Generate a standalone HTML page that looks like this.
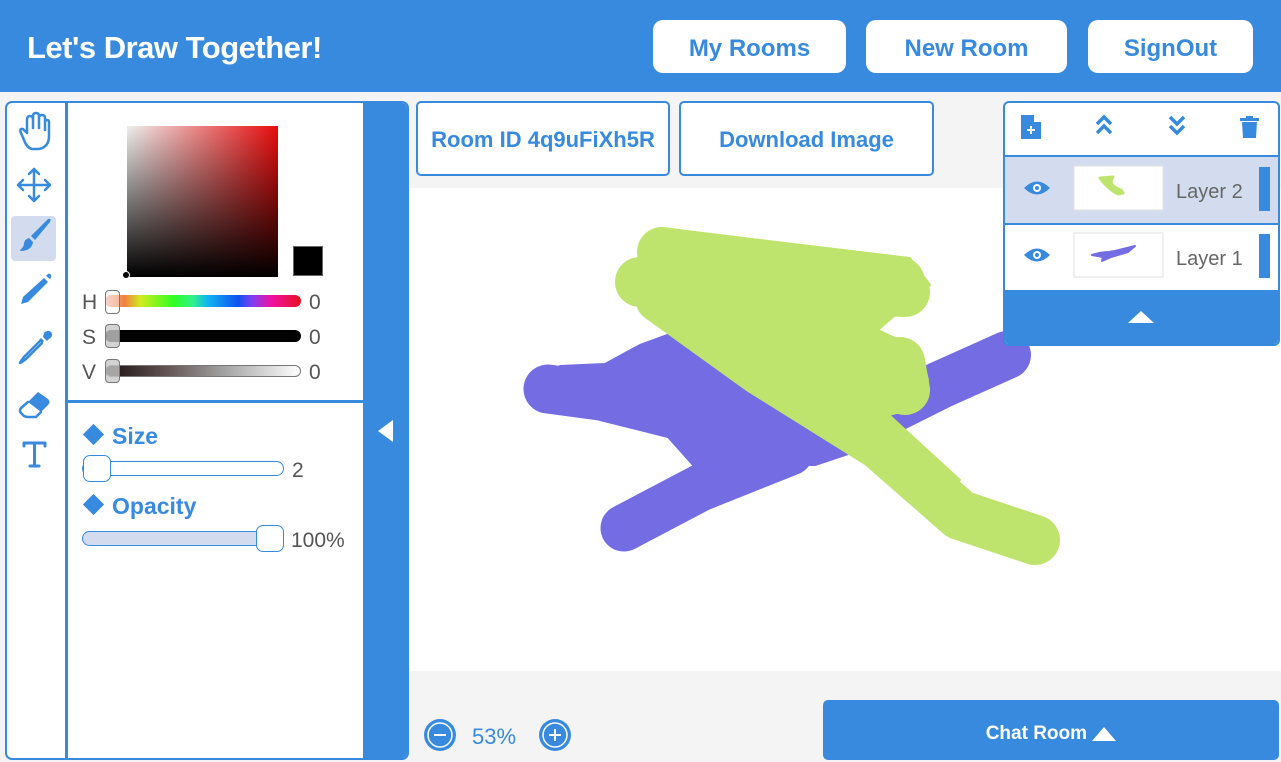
<!DOCTYPE html>
<html><head><meta charset="utf-8"><style>
*{box-sizing:border-box;margin:0;padding:0}
body{width:1281px;height:762px;overflow:hidden;background:#f4f4f4;font-family:"Liberation Sans",sans-serif;position:relative}
.abs{position:absolute}
.hdr{left:0;top:0;width:1281px;height:92px;background:#388ade}
.title{left:27px;top:30px;color:#fff;font-weight:bold;font-size:31px;letter-spacing:-0.5px}
.hb{top:20px;height:53px;background:#fff;border-radius:10px;color:#388ade;font-weight:bold;font-size:24px;display:flex;align-items:center;justify-content:center;padding-top:4px}
.box{border:2px solid #388ade;background:#fff}
.bt{color:#388ade;font-weight:bold;font-size:22px;display:flex;align-items:center;justify-content:center;border-radius:4px;padding-top:3px}
.lbl{color:#555;font-size:21px}
.track{border-radius:8px}
.thumb{background:#fff;border:1.5px solid #777;border-radius:4px}
.b2{background:#388ade}
</style></head><body>
<div class="abs hdr"></div>
<div class="abs title">Let's Draw Together!</div>
<div class="abs hb" style="left:653px;width:193px">My Rooms</div>
<div class="abs hb" style="left:866px;width:201px">New Room</div>
<div class="abs hb" style="left:1088px;width:165px">SignOut</div>

<div class="abs" style="left:410px;top:188px;width:871px;height:483px;background:#fff"></div>
<svg class="abs" style="left:0;top:0" width="1281" height="762">
<g fill="#746ce3" stroke="#746ce3" stroke-linecap="round" stroke-linejoin="round">
<path d="M548 389 L668 405" stroke-width="49"/>
<path d="M624 528 L700 488 L790 452" stroke-width="47"/>
<path d="M1007 355 L940 385 L870 420" stroke-width="48"/>
<polygon stroke-width="2" points="560,366 605,364 640,345 681,330 760,335 850,375 880,410 860,450 815,465 693,465 668,437 600,420"/>
</g>
<g fill="#bfe46d" stroke="#bfe46d" stroke-linecap="round" stroke-linejoin="round">
<path d="M662 252 L900 282" stroke-width="50"/>
<path d="M640 282 L905 292" stroke-width="50"/>
<path d="M900 362 L905 390" stroke-width="50"/>
<path d="M660 298 L760 370 L880 445 L960 515 L1035 540" stroke-width="50"/>
<polygon stroke-width="2" points="659,228 910,258 930,285 878,330 920,350 928,380 900,412 889,415 960,480 933,513 859,453 648,308 631,283 645,250"/>
</g>
</svg>

<div class="abs box" style="left:416px;top:101px;width:254px;height:75px;border-radius:5px"><div class="bt" style="height:100%">Room ID 4q9uFiXh5R</div></div>
<div class="abs box" style="left:679px;top:101px;width:255px;height:75px;border-radius:5px"><div class="bt" style="height:100%">Download Image</div></div>

<div class="abs" style="left:5px;top:101px;width:404px;height:659px;border:2px solid #388ade;border-radius:7px;background:#fff;overflow:hidden">
 <div class="abs b2" style="left:356px;top:0;width:48px;height:659px"></div>
 <div class="abs b2" style="left:58px;top:0;width:3px;height:659px"></div>
 <div class="abs b2" style="left:61px;top:297px;width:295px;height:3px"></div>
</div>
<div class="abs" style="left:378px;top:420px;width:0;height:0;border-top:11px solid transparent;border-bottom:11px solid transparent;border-right:15px solid #fff"></div>

<div class="abs" style="left:11px;top:216px;width:45px;height:45px;background:#d3dcee;border-radius:4px"></div>
<svg class="abs" style="left:0;top:100px" width="66" height="380" fill="none" stroke="#388ade" stroke-width="2.5" stroke-linecap="round" stroke-linejoin="round">
<path d="M24 40 L21 33 Q19 28 23 29 L27 33 L27 20 Q27 16 30 16 Q33 16 33 20 L33 28 L33 16 Q33 13 36 13 Q39 13 39 16 L39 28 L39 18 Q39 15 42 15 Q45 15 45 18 L45 30 L45 22 Q45 20 47 20 Q49 20 49 22 L49 36 Q49 47 39 49 L32 49 Q27 48 24 40 Z"/>
<path d="M34 69 L34 101 M18 85 L50 85 M29 74 L34 69 L39 74 M29 96 L34 101 L39 96 M23 80 L18 85 L23 90 M45 80 L50 85 L45 90"/>
<g fill="#388ade" stroke="none"><path d="M48 119 Q52 118 50 122 L35 140 L31 136 Z"/><path d="M29 138 L33 142 Q32 150 22 151 Q20 151 20 150 Q24 147 24 143 Q25 139 29 138 Z"/>
<path d="M44 178 L48 182 L28 202 L21 204 L23 197 Z"/><path d="M46 176 L48 174 Q50 173 51 175 L51 176 Q52 177 50 179 Z"/>
<path d="M44 233 Q48 229 51 232 Q54 236 49 239 L47 241 L43 237 Z"/><path d="M41 238 L44 241 L42 243 L39 240 Z"/></g>
<path d="M40 241 L24 257 L21 261 L20 263 L22 262 L26 259 L42 243"/>
<g fill="#388ade" stroke="none"><path d="M38 292 L48 299 Q51 302 48 305 L41 312 L28 302 Z"/></g>
<path d="M28 302 L21 308 Q19 311 21 313 L24 316 Q26 317 28 317 L36 317 L41 312" stroke-width="2.5"/>
<path d="M24 343 L24 346 M24 343 L45 343 L45 346 M34.5 343 L34.5 366 M30 366 L39 366" stroke-width="3"/>
</svg>

<div class="abs" style="left:127px;top:126px;width:151px;height:151px;background:linear-gradient(to bottom,rgba(0,0,0,0),#000),linear-gradient(to right,#eee,#e80d0d)"></div>
<div class="abs" style="left:122px;top:271px;width:8px;height:8px;border-radius:50%;background:#000;border:1px solid #fff"></div>
<div class="abs" style="left:293px;top:246px;width:30px;height:30px;background:#000;border:1px solid #666"></div>
<div class="abs lbl" style="left:82px;top:291px">H</div>
<div class="abs lbl" style="left:82px;top:326px">S</div>
<div class="abs lbl" style="left:82px;top:361px">V</div>
<div class="abs lbl" style="left:309px;top:291px">0</div>
<div class="abs lbl" style="left:309px;top:326px">0</div>
<div class="abs lbl" style="left:309px;top:361px">0</div>
<div class="abs track" style="left:105px;top:295px;width:196px;height:12px;background:linear-gradient(to right,#f0b8b0,#f08040 10%,#d0ec20 18%,#30ff20 35%,#30f090 45%,#10b8f0 52%,#1050f0 68%,#8040f0 75%,#f010a0 85%,#e81020)"></div>
<div class="abs track" style="left:105px;top:330px;width:196px;height:12px;background:#000"></div>
<div class="abs track" style="left:105px;top:365px;width:196px;height:12px;background:linear-gradient(to right,#1a1010,#605050 30%,#a0a0a0 60%,#fff);border:1px solid #777"></div>
<div class="abs thumb" style="left:105px;top:290px;width:15px;height:24px;background:rgba(255,255,255,.4)"></div>
<div class="abs thumb" style="left:105px;top:324px;width:15px;height:24px;background:rgba(200,200,200,.8)"></div>
<div class="abs thumb" style="left:105px;top:359px;width:15px;height:24px;background:rgba(200,200,200,.8)"></div>

<div class="abs" style="left:86px;top:427px;width:15px;height:15px;background:#388ade;transform:rotate(45deg)"></div>
<div class="abs" style="left:112px;top:423px;color:#388ade;font-weight:bold;font-size:23px">Size</div>
<div class="abs track" style="left:82px;top:461px;width:202px;height:15px;border:1.5px solid #388ade"></div>
<div class="abs" style="left:83px;top:455px;width:28px;height:27px;background:#fff;border:1.5px solid #388ade;border-radius:7px"></div>
<div class="abs lbl" style="left:292px;top:459px">2</div>
<div class="abs" style="left:86px;top:497px;width:15px;height:15px;background:#388ade;transform:rotate(45deg)"></div>
<div class="abs" style="left:112px;top:493px;color:#388ade;font-weight:bold;font-size:23px">Opacity</div>
<div class="abs track" style="left:82px;top:531px;width:202px;height:15px;border:1.5px solid #388ade;background:#d3dcee"></div>
<div class="abs" style="left:256px;top:525px;width:28px;height:27px;background:#fff;border:1.5px solid #388ade;border-radius:7px"></div>
<div class="abs lbl" style="left:291px;top:529px">100%</div>

<div class="abs" style="left:1003px;top:101px;width:277px;height:245px;border:2px solid #388ade;border-radius:6px;background:#fff;overflow:hidden">
 <div class="abs" style="left:0;top:52px;width:273px;height:2px;background:#388ade"></div>
 <div class="abs" style="left:0;top:54px;width:273px;height:66px;background:#d3dcee"></div>
 <div class="abs" style="left:0;top:120px;width:273px;height:2px;background:#388ade"></div>
 <div class="abs b2" style="left:0;top:187px;width:273px;height:56px"></div>
</div>
<svg class="abs" style="left:1003px;top:101px" width="277" height="245">
<path d="M18 14 L31 14 L38 21 L38 38 L18 38 Z" fill="#388ade"/><path d="M31 14 L31 21 L38 21" fill="#fff"/>
<path d="M28 25 L28 33 M24 29 L32 29" stroke="#fff" stroke-width="2"/>
<path d="M94 23 L101 16 L108 23 M94 32 L101 25 L108 32" stroke="#388ade" stroke-width="3.5" fill="none"/>
<path d="M167 16 L174 23 L181 16 M167 25 L174 32 L181 25" stroke="#388ade" stroke-width="3.5" fill="none"/>
<rect x="237" y="17" width="19" height="3" fill="#388ade"/><rect x="243" y="15" width="7" height="3" fill="#388ade"/><path d="M239 21 L254 21 L253 37 L240 37 Z" fill="#388ade"/>
<g fill="#388ade"><path d="M21 87 Q34 74 47 87 Q34 100 21 87Z"/><path d="M21 154 Q34 141 47 154 Q34 167 21 154Z"/></g>
<g fill="#fff"><circle cx="34" cy="87" r="4"/><circle cx="34" cy="154" r="4"/></g>
<g fill="#388ade"><circle cx="34" cy="87" r="2"/><circle cx="34" cy="154" r="2"/></g>
<rect x="71" y="65" width="89" height="44" fill="#fff" stroke="#e0e0e0"/>
<rect x="71" y="132" width="89" height="44" fill="#fff" stroke="#e0e0e0"/>
<path d="M97 77 L110 76 Q104 84 118 89 L120 92 L115 93 Q105 88 97 77Z" fill="#bfe46d" stroke="#bfe46d" stroke-width="3" stroke-linejoin="round"/>
<path d="M89 154 Q98 151 106 151 L112 150 L132 145 L125 151 L108 156 L99 160 L100 156 Z" fill="#746ce3" stroke="#746ce3" stroke-width="2" stroke-linejoin="round"/>
<text x="173" y="97" font-family="Liberation Sans" font-size="20" fill="#666">Layer 2</text>
<text x="173" y="164" font-family="Liberation Sans" font-size="20" fill="#666">Layer 1</text>
<rect x="256" y="66" width="11" height="44" fill="#388ade"/><rect x="256" y="133" width="11" height="44" fill="#388ade"/>
<path d="M125 222 L138 210 L151 222 Z" fill="#fff"/>
</svg>

<svg class="abs" style="left:420px;top:715px" width="160" height="40">
<circle cx="20" cy="20" r="16" fill="#388ade"/><circle cx="20" cy="20" r="12" fill="none" stroke="#fff" stroke-width="1.5"/><path d="M14 20 L26 20" stroke="#fff" stroke-width="2"/>
<circle cx="135" cy="20" r="16" fill="#388ade"/><circle cx="135" cy="20" r="12" fill="none" stroke="#fff" stroke-width="1.5"/><path d="M129 20 L141 20 M135 14 L135 26" stroke="#fff" stroke-width="2"/>
<text x="52" y="29" font-family="Liberation Sans" font-size="22" fill="#388ade">53%</text>
</svg>
<div class="abs b2" style="left:823px;top:700px;width:456px;height:60px;border-radius:5px;color:#fff;font-weight:bold;font-size:19px;display:flex;align-items:center;justify-content:center;padding-top:8px">Chat Room&nbsp;<span style="display:inline-block;width:0;height:0;border-left:12px solid transparent;border-right:12px solid transparent;border-bottom:14px solid #fff"></span></div>
</body></html>
